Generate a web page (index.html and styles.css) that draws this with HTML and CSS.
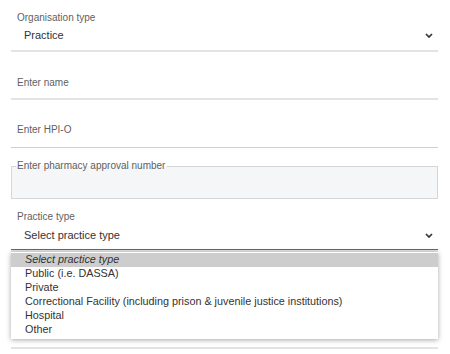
FILE: index.html
```html
<!DOCTYPE html>
<html lang="en">

<head>
    <meta charset="UTF-8">
    <meta name="viewport" content="width=device-width, initial-scale=1.0">
    <title>Organisation details</title>
    <link rel="stylesheet" href="styles.css">
</head>

<body>
    <form class="orgForm">
        <div class="field selectField">
            <span class="fieldLabel">Organisation type</span>
            <div class="selectValue">
                <span>Practice</span>
                <svg class="chevron" width="8" height="5" viewBox="0 0 8 5">
                    <polyline points="1,1 4,4 7,1" />
                </svg>
            </div>
        </div>

        <div class="field textField">
            <span class="placeholder">Enter name</span>
        </div>

        <div class="field textField thinLine">
            <span class="placeholder">Enter HPI-O</span>
        </div>

        <fieldset class="boxField">
            <legend>Enter pharmacy approval number</legend>
        </fieldset>

        <div class="field selectField openSelect">
            <span class="fieldLabel">Practice type</span>
            <div class="selectValue">
                <span>Select practice type</span>
                <svg class="chevron" width="8" height="5" viewBox="0 0 8 5">
                    <polyline points="1,1 4,4 7,1" />
                </svg>
            </div>
            <ul class="optionList">
                <li class="selected">Select practice type</li>
                <li>Public (i.e. DASSA)</li>
                <li>Private</li>
                <li>Correctional Facility (including prison &amp; juvenile justice institutions)</li>
                <li>Hospital</li>
                <li>Other</li>
            </ul>
        </div>

        <div class="field hiddenField"></div>
    </form>
</body>

</html>
```

FILE: styles.css
```css
body {
    margin: 0;
    background-color: white;
    font-family: "Liberation Sans", Arial, Helvetica, sans-serif;
    color: #333;
}

.orgForm {
    padding: 0 12px 0 11px;
}

.field {
    position: relative;
    display: flex;
    flex-direction: column;
    border-bottom: 2px solid #e3e3e3;
}

.selectField {
    padding: 12px 0 8px 6px;
}

.fieldLabel {
    font-size: 10px;
    line-height: 12px;
    color: #5f5f5f;
}

.selectValue {
    display: flex;
    align-items: center;
    justify-content: space-between;
    margin-top: 4px;
    padding: 0 5px 0 7px;
    font-size: 11px;
    line-height: 14px;
    color: #333;
}

.chevron polyline {
    fill: none;
    stroke: #333;
    stroke-width: 1.7;
}

.textField {
    padding: 24px 0 8px 6px;
}

.textField.thinLine {
    padding: 23px 0 10px 6px;
    border-bottom: 1px solid #d0d0d0;
}

.placeholder {
    font-size: 10px;
    line-height: 14px;
    color: #5f5f5f;
}

.boxField {
    margin: 12px 0 0 0;
    padding: 0;
    height: 39px;
    box-sizing: border-box;
    border: 1px solid #d3d7dc;
    background-color: #f5f6f8;
}

.boxField legend {
    margin-left: 4px;
    padding: 0 2px 0 1px;
    font-size: 10px;
    line-height: 12px;
    color: #5f5f5f;
}

.openSelect {
    margin-top: 12px;
    padding-top: 0;
    padding-bottom: 7px;
    border-bottom: 1px solid #d23a4e;
    box-shadow: 0 2px 0 #e3e3e3;
    z-index: 2;
}

.openSelect .selectValue {
    margin-top: 5px;
}

.optionList {
    position: absolute;
    top: calc(100% + 3px);
    left: 0;
    right: 0;
    margin: 0;
    padding: 1px 0 3px 0;
    list-style: none;
    background-color: white;
    box-shadow: 0 1px 5px rgba(0, 0, 0, 0.35);
    font-size: 10.8px;
    line-height: 13.9px;
    color: #333;
}

.optionList li {
    padding-left: 14px;
    white-space: nowrap;
}

.optionList .selected {
    background-color: #cdcdcd;
    font-style: italic;
}

.hiddenField {
    height: 97px;
}
```
